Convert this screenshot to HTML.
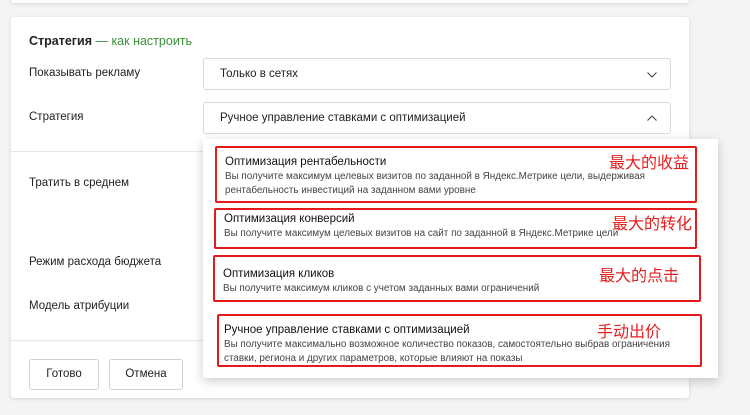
<!DOCTYPE html>
<html><head><meta charset="utf-8"><style>
body{margin:0;width:750px;height:415px;background:#f4f4f4;font-family:"Liberation Sans",sans-serif;position:relative;overflow:hidden;color:#222}
.a{position:absolute}
.card{background:#fff;box-shadow:0 1px 4px rgba(0,0,0,.12);border-radius:3px}
.sel{background:#fff;border:1px solid #d9d9d9;border-radius:3px;font-size:11.5px;line-height:31px;padding-left:16px;box-sizing:border-box}
.lbl{font-size:11.5px}
.rb{border:2px solid #e31b1b;border-radius:2px;box-sizing:border-box}
.t{font-size:11.5px;color:#111;position:absolute;left:8px;white-space:nowrap}
.d{font-size:9.9px;color:#444;position:absolute;left:8px;line-height:14px;white-space:nowrap}
.cn{position:absolute;color:#e52020;font-family:"Noto Sans CJK SC",sans-serif;font-size:16px}
.btn{border:1px solid #d0d0d0;border-radius:3px;font-size:11.5px;text-align:center;line-height:29px;background:#fff;box-sizing:border-box}
</style></head><body>
<div class="a card" style="left:11px;top:-10px;width:678px;height:13px"></div>
<div class="a card" style="left:11px;top:17px;width:678px;height:381px"></div>
<div class="a" style="left:29px;top:34px;font-size:12.5px;font-weight:bold">Стратегия <span style="font-weight:normal;color:#3a8f3a">— как настроить</span></div>
<div class="a lbl" style="left:29px;top:67px">Показывать рекламу</div>
<div class="a lbl" style="left:29px;top:111px">Стратегия</div>
<div class="a" style="left:11px;top:151px;width:192px;height:1px;background:#e6e6e6"></div>
<div class="a lbl" style="left:29px;top:177px">Тратить в среднем</div>
<div class="a lbl" style="left:29px;top:256px">Режим расхода бюджета</div>
<div class="a lbl" style="left:29px;top:300px">Модель атрибуции</div>
<div class="a" style="left:11px;top:340px;width:192px;height:1px;background:#e6e6e6"></div>
<div class="a btn" style="left:29px;top:359px;width:70px;height:31px">Готово</div>
<div class="a btn" style="left:109px;top:359px;width:74px;height:31px">Отмена</div>
<div class="a sel" style="left:203px;top:58px;width:468px;height:32px">Только в сетях
<svg class="a" style="right:12px;top:12px" width="12" height="8"><path d="M1.5 1.5l4.5 4.5 4.5-4.5" stroke="#444" stroke-width="1.1" fill="none"/></svg></div>
<div class="a sel" style="left:203px;top:102px;width:468px;height:32px">Ручное управление ставками с оптимизацией
<svg class="a" style="right:12px;top:11px" width="12" height="8"><path d="M1.5 6.5l4.5-4.5 4.5 4.5" stroke="#444" stroke-width="1.1" fill="none"/></svg></div>
<div class="a" style="left:203px;top:139px;width:515px;height:239px;background:#fff;box-shadow:0 3px 10px rgba(0,0,0,.2)"></div>
<div class="a rb" style="left:215px;top:146px;width:482px;height:57px">
<div class="t" style="top:8px">Оптимизация рентабельности</div>
<div class="d" style="top:22px">Вы получите максимум целевых визитов по заданной в Яндекс.Метрике цели, выдерживая<br>рентабельность инвестиций на заданном вами уровне</div>
<div class="cn" style="left:392px;top:1px">最大的收益</div></div>
<div class="a rb" style="left:214px;top:208px;width:483px;height:41px">
<div class="t" style="top:3px">Оптимизация конверсий</div>
<div class="d" style="top:17px">Вы получите максимум целевых визитов на сайт по заданной в Яндекс.Метрике цели</div>
<div class="cn" style="left:396px;top:0px">最大的转化</div></div>
<div class="a rb" style="left:213px;top:255px;width:488px;height:47px">
<div class="t" style="top:11px">Оптимизация кликов</div>
<div class="d" style="top:25px">Вы получите максимум кликов с учетом заданных вами ограничений</div>
<div class="cn" style="left:384px;top:5px">最大的点击</div></div>
<div class="a rb" style="left:217px;top:314px;width:485px;height:53px">
<div class="t" style="top:8px;left:5px">Ручное управление ставками с оптимизацией</div>
<div class="d" style="top:22px;left:5px">Вы получите максимально возможное количество показов, самостоятельно выбрав ограничения<br>ставки, региона и других параметров, которые влияют на показы</div>
<div class="cn" style="left:378px;top:2px">手动出价</div></div>
</body></html>
